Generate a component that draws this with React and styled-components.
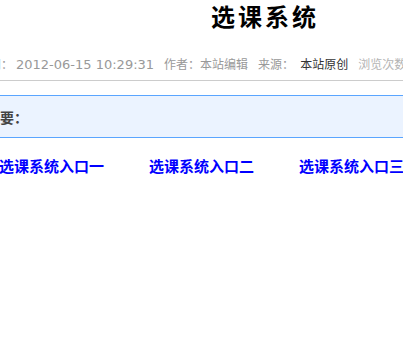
import React from "react";
import styled, { createGlobalStyle } from "styled-components";

const GlobalStyle = createGlobalStyle`
    html, body {
        margin: 0;
        padding: 0;
        background: #fff;
    }
    body {
        font-family: "DejaVu Sans", "Noto Sans CJK SC", sans-serif;
        font-size: 12px;
    }
`;

const links = ["选课系统入口一", "选课系统入口二", "选课系统入口三"];

export default function App() {
    return (
        <>
            <GlobalStyle />
            <Page>
                <Article>
                    <Title>选课系统</Title>
                    <Meta>
                        <MetaItem>
                            发布时间：<Num>2012-06-15 10:29:31</Num>
                        </MetaItem>
                        <MetaItem>作者：本站编辑</MetaItem>
                        <MetaItem>
                            来源：<Strong>本站原创</Strong>
                        </MetaItem>
                        <MetaItem $light>浏览次数：<Num>1024</Num></MetaItem>
                    </Meta>
                    <Summary>
                        <SummaryLabel>摘要：</SummaryLabel>
                    </Summary>
                    <LinkRow>
                        {links.map((l) => (
                            <EntryLink key={l} href="#">
                                {l}
                            </EntryLink>
                        ))}
                    </LinkRow>
                </Article>
            </Page>
        </>
    );
}

const Page = styled.div`
    width: 403px;
    height: 346px;
    overflow: hidden;
`;
const Article = styled.div`
    width: 630px;
    margin-left: -50px;
`;
const Title = styled.h1`
    margin: 0;
    height: 32px;
    line-height: 32px;
    text-align: center;
    font-family: "Noto Sans CJK SC", sans-serif;
    font-size: 24px;
    font-weight: bold;
    letter-spacing: 3px;
    color: #000;
`;
const Meta = styled.div`
    margin-top: 20px;
    padding: 0 3px 4px;
    height: 24px;
    line-height: 24px;
    border-bottom: 1px solid #cccccc;
    white-space: nowrap;
    color: #999;
    font-family: "Noto Sans CJK SC", sans-serif;
    font-size: 12px;
    display: flex;
    gap: 10px;
`;
const MetaItem = styled.span`
    color: ${(p) => (p.$light ? "#b4b4b4" : "inherit")};
`;
const Num = styled.span`
    font-family: "DejaVu Sans", sans-serif;
    font-size: 13px;
    margin-left: 3px;
`;
const Strong = styled.span`
    color: #333;
    margin-left: 6px;
`;
const Summary = styled.div`
    margin-top: 14px;
    height: 41px;
    display: flex;
    align-items: center;
    padding-left: 36px;
    background: #ebf3ff;
    border-top: 1px solid #5aa5ff;
    border-bottom: 1px solid #5aa5ff;
`;
const SummaryLabel = styled.span`
    font-family: "Noto Sans CJK SC", sans-serif;
    font-size: 14px;
    font-weight: bold;
    color: #444;
`;
const LinkRow = styled.div`
    margin-top: 16px;
    padding-left: 49px;
    display: flex;
    gap: 45px;
    line-height: 24px;
    white-space: nowrap;
`;
const EntryLink = styled.a`
    font-family: "Noto Sans CJK SC", sans-serif;
    font-size: 15px;
    font-weight: bold;
    color: #0000ff;
    text-decoration: none;
`;
